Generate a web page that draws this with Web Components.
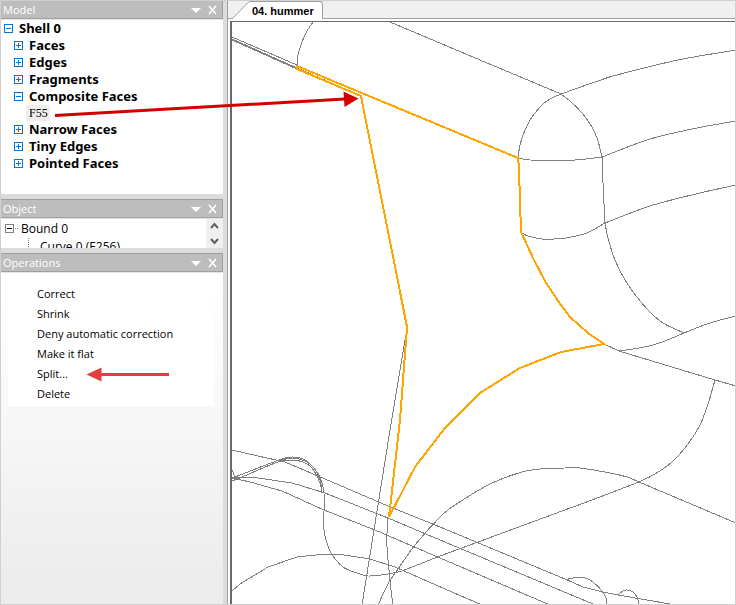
<!DOCTYPE html>
<html lang="en">
<head>
<meta charset="utf-8">
<title>04. hummer</title>
<style>
html, body { height: 100%; margin: 0; }
body { background: #fff; font: 11px/20px "Open Sans", "Noto Sans", sans-serif; color: #000; }
</style>
</head>
<body>
<model-app></model-app>
<script>
const define = (name, html, setup) => {
  const template = document.createElement('template');
  template.innerHTML = html;
  customElements.define(name, class extends HTMLElement {
    connectedCallback() {
      if (this.shadowRoot) return;
      const root = this.attachShadow({ mode: 'open' });
      root.append(template.content.cloneNode(true));
      if (setup) setup(root, this);
    }
  });
};

const reset = `* { box-sizing: border-box; }
button { font: inherit; color: inherit; background: none; border: 0; margin: 0; padding: 0; text-align: left; }
svg { display: block; }`;

define('dock-panel', `<style>${reset}
:host { display: flex; flex-direction: column; min-height: 0; }
header { display: flex; align-items: center; flex: none; height: 19px; padding: 0 5px 0 2px; gap: 7px;
  background: #bdbdbd; border: 1px solid #a0a0a0; border-left: 0; color: #fff; }
h2 { flex: 1; margin: 0; font: inherit; line-height: 16px; }
.body { flex: 1; min-height: 0; overflow: hidden; background: #fff; border-top: 1px solid #e4e4e4; }
</style>
<header><h2></h2>
<button aria-label="Panel menu"><svg width="10" height="10"><path d="M0 3h10L5 8z" fill="#fff"/></svg></button>
<button aria-label="Close panel"><svg width="9" height="10"><path d="M1 1l7 8M8 1l-7 8" stroke="#fff" stroke-width="1.500"/></svg></button>
</header>
<div class="body"><slot></slot></div>`,
(root, host) => { root.querySelector('h2').textContent = host.getAttribute('heading'); });

define('tree-row', `<style>${reset}
:host { display: block; }
button { display: flex; align-items: center; gap: 6px; height: 17px; font: bold 13px/17px "Noto Sans", "Open Sans", sans-serif; padding-left: 3px; }
:host([level="1"]) button { padding-left: 13px; }
:host([leaf]) button { height: 16px; padding-left: 25px; font: 12px/16px "Liberation Serif", serif; }
:host([leaf]) svg { display: none; }
:host([leaf]) span { background: #eee; padding: 0 2px 0 3px; }
:host([open]) .v { display: none; }
</style>
<button><svg width="9" height="9" fill="none" stroke="#0078d7" shape-rendering="crispEdges"><rect x=".5" y=".5" width="8" height="8"/><path d="M2 4.5h5"/><path class="v" d="M4.5 2v5"/></svg><span><slot></slot></span></button>`);

define('model-tree', `<style>:host { display: block; padding-bottom: 22px; }</style>
<tree-row open>Shell 0</tree-row>
<tree-row level="1">Faces</tree-row>
<tree-row level="1">Edges</tree-row>
<tree-row level="1">Fragments</tree-row>
<tree-row level="1" open>Composite Faces</tree-row>
<tree-row leaf>F55</tree-row>
<tree-row level="1">Narrow Faces</tree-row>
<tree-row level="1">Tiny Edges</tree-row>
<tree-row level="1">Pointed Faces</tree-row>`);

define('object-tree', `<style>${reset}
:host { display: flex; height: 29px; overflow: hidden; font: 12px/17px "Open Sans", "Noto Sans", sans-serif; }
.rows { flex: 1; }
.row { display: flex; align-items: center; height: 18px; padding: 1px 0 0 4px; gap: 3px; }
.child { padding-left: 27px; gap: 11px; }
.scroll { display: flex; flex-direction: column; width: 17px; background: #f0f0f0; }
.scroll button { flex: 1; display: grid; place-items: center; }
</style>
<div class="rows">
<button class="row"><svg width="13" height="9" fill="none" shape-rendering="crispEdges"><rect x=".5" y=".5" width="8" height="8" stroke="#808080"/><path d="M2 4.5h5" stroke="#000"/><path d="M10 4.5h3" stroke="#808080" stroke-dasharray="1 1"/></svg>Bound 0</button>
<button class="row child"><svg width="1" height="17"><path d="M.5 0v17" stroke="#808080" stroke-dasharray="1 1"/></svg>Curve 0 (E256)</button>
</div>
<div class="scroll">
<button aria-label="Scroll up"><svg width="9" height="8" fill="none" stroke="#606060" stroke-width="2"><path d="M1 6l3.500-4L8 6"/></svg></button>
<button aria-label="Scroll down"><svg width="9" height="8" fill="none" stroke="#606060" stroke-width="2"><path d="M1 2l3.500 4L8 2"/></svg></button>
</div>`);

define('operation-list', `<style>${reset}
:host { display: block; height: 100%; background: linear-gradient(#fff, #f8f8f8 40%, #ededed 90%); padding: 0 9px 0 7px; }
div { display: flex; flex-direction: column; align-items: stretch; background: #fff; padding: 11px 0 2px 29px; }
button { height: 20px; }
</style>
<div><button>Correct</button><button>Shrink</button><button>Deny automatic correction</button><button>Make it flat</button><button>Split...</button><button>Delete</button></div>`);

define('document-tab', `<style>${reset}
:host { display: flex; height: 18px; }
.lead { flex: none; }
button { height: 18px; padding: 0 8px 0 1px; background: #fff; border: solid #a0a0a0; border-width: 1px 1px 0 0; border-radius: 0 3px 0 0; font: bold 11px/16px "Liberation Sans", sans-serif; }
</style>
<svg class="lead" width="19" height="18"><path d="M0 18L15.500 2Q17 .5 19 .5V18" fill="#fff" stroke="none"/><path d="M0 18L15.500 2Q17 .5 19 .5" fill="none" stroke="#a0a0a0"/></svg>
<button><slot></slot></button>`);

const wire = [
  '232,37 297,65', '232,39 297,68 361,96', '232,40 297,69', '390,22 480,60 561,94',
  '407,328 390,430 362,605', '619,351 715,380 736,386', '604,344 619,351',
  '232,450 258,456 285,462 325,479 388,506 440,527 565,579 583,587 603,592 618,595 670,604',
  '232,477 258,478 292,483 325,493 388,518 440,540 593,604',
  '232,478 250,482 282,491 324,510 375,530 440,558 550,605',
  '232,591 240,584 268,567 297,557 325,554 338,554 370,559 395,567 445,589 482,605',
  '232,470 235,477 241,478', '639,482 736,523', '402,571 440,556 592,500 639,482'
];
const curves = [
  '297,66 298,55 302,42 307,31 313,22',
  '561,94 595,82 613,76 678,60 736,50',
  '518,158 520,145 525,130 532,117 542,105 550,99 561,94',
  '561,94 570,101 582,113 592,127 598,141 601,153 602,157',
  '602,157 603,183 605,223',
  '605,223 608,238 615,260 625,280 637,297 650,312 663,323 684,333',
  '518,158 530,160 575,160 602,157',
  '602,157 650,139 697,128 736,121',
  '520,232 528,236 542,239 554,239 566,238 587,233 605,223',
  '605,223 650,206 700,193 736,185',
  '619,351 633,349 653,345 670,339 684,333 710,323 736,316',
  '715,380 708,404 700,425 688,444 672,462 655,474 639,482',
  '402,571 388,574 368,576 357,573 343,567 331,553 326,540 324,530 324,493 322,483 317,472 305,460 293,457 282,459 235,477 232,478',
  '232,481 242,477 278,462 292,460 303,462 312,468 320,483 322,493',
  '278,461 292,458 305,461 314,468 320,480 322,490',
  '378,605 388,584 398,569 415,545 441,516 455,505 490,484 522,472 540,469 565,468 580,468 610,473 627,477 639,482',
  '388,517 387,533 387,547 389,570 391,590 393,605',
  '565,580 573,578 585,578 593,582 602,591 606,598 607,605',
  '618,595 623,591 627,590 633,592 637,597 639,605'
];
// Catmull-Rom spline through the given points, written as cubic segments.
const spline = text => {
  const p = text.split(' ').map(s => s.split(',').map(Number));
  let d = 'M' + p[0];
  for (let i = 0; i < p.length - 1; i++) {
    const a = p[i - 1] || p[i], b = p[i], c = p[i + 1], e = p[i + 2] || c;
    const seg = Math.hypot(c[0] - b[0], c[1] - b[1]);
    const handle = (m, n) => {
      const len = Math.hypot(n[0] - m[0], n[1] - m[1]) || 1;
      return [(n[0] - m[0]) / len * seg / 3, (n[1] - m[1]) / len * seg / 3];
    };
    const h = handle(a, c), k = handle(b, e);
    d += `C${b[0] + h[0]},${b[1] + h[1]} ${c[0] - k[0]},${c[1] - k[1]} ${c}`;
  }
  return d;
};

define('wire-view', `<style>
:host { display: block; min-height: 0; min-width: 0; overflow: hidden; background: #fff; border: solid #696969; border-width: 1px 0 0 2px; }
svg { display: block; width: 100%; height: 100%; }
</style>
<svg role="img" aria-label="Wireframe of the model" fill="none" shape-rendering="crispEdges"><g transform="translate(-232 -22)">
<g stroke="#808080">${wire.map(p => `<polyline points="${p}"/>`).join('')}${curves.map(c => `<path d="${spline(c)}"/>`).join('')}</g>
<path stroke="#ffa500" stroke-width="2" d="M297 66L518 158L519 168L520 202L521 232L534 260L545 281L558 301L570 317L588 333L604 344L561 352L520 368L480 393L445 428L415 467L389 517L400 420L407 327L361 96L297 69Z"/>
</g></svg>`);

define('callout-arrows', `<style>
:host { position: absolute; inset: 0; pointer-events: none; }
svg { display: block; width: 100%; height: 100%; }
</style>
<svg aria-hidden="true"><path d="M55 115.500L345 99" stroke="#d40000" stroke-width="3"/><path d="M343.500 91.500L358.500 98.500L344.500 107z" fill="#d40000"/>
<path d="M100 374.500H169" stroke="#e04040" stroke-width="3"/><path d="M86.500 374.500L101.500 367.500V381.500z" fill="#e04040"/></svg>`);

define('model-app', `<style>${reset}
:host { display: flex; position: relative; height: 100%; overflow: hidden; background: #dcdcdc; }
:host::after { content: ""; position: absolute; inset: 0; border: 1px solid #d0d0d0; pointer-events: none; }
aside { display: flex; flex-direction: column; gap: 5px; flex: none; width: 223px; padding-left: 1px; }
.ops { flex: 1; }
main { flex: 1; min-width: 0; display: flex; flex-direction: column; margin-left: 4px; border-left: 1px solid #a0a0a0; background: #fff; }
nav { display: flex; flex: none; height: 19px; padding: 1px 0 0 4px; background: linear-gradient(#a0a0a0, #a0a0a0) bottom / 100% 1px no-repeat #f0f0f0; }
wire-view { flex: 1; margin: 2px 0 0 2px; }
</style>
<aside>
<dock-panel heading="Model"><model-tree></model-tree></dock-panel>
<dock-panel heading="Object"><object-tree></object-tree></dock-panel>
<dock-panel class="ops" heading="Operations"><operation-list></operation-list></dock-panel>
</aside>
<main><nav><document-tab>04. hummer</document-tab></nav><wire-view></wire-view></main>
<callout-arrows></callout-arrows>`);
</script>
</body>
</html>
